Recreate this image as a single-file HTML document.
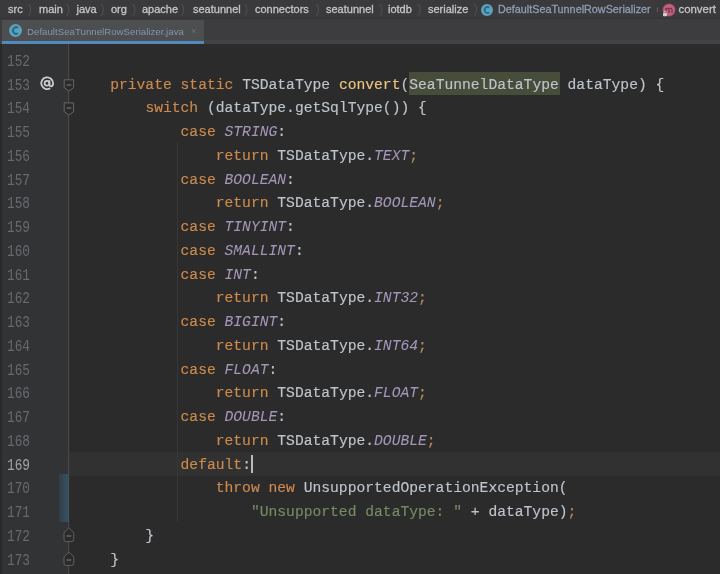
<!DOCTYPE html>
<html><head><meta charset="utf-8">
<style>
*{margin:0;padding:0;box-sizing:border-box}
html,body{width:720px;height:574px;overflow:hidden;background:#2b2b2b}
body{position:relative;font-family:"Liberation Sans",sans-serif}
#wrap{position:absolute;left:0;top:0;width:720px;height:574px;will-change:transform}
.a{position:absolute}
#crumbs{left:0;top:0;width:720px;height:19px;background:#3a3a3c}
#crumbs span{position:absolute;top:3px;font-size:11px;color:#c4c4c4;-webkit-text-stroke:0.3px currentColor;white-space:nowrap;line-height:13px}
#crumbs span.ch{color:#707070;font-size:10px}
#tabs{left:0;top:19px;width:720px;height:25px;background:#3d3d3f}
.ln{position:absolute;left:7.2px;transform:scale(0.87,1.08);transform-origin:0 50%;font-family:"Liberation Mono",monospace;font-size:14.67px;color:#676a6d;line-height:23.75px;white-space:pre}
.cl{position:absolute;left:75px;font-family:"Liberation Mono",monospace;font-size:14.67px;color:#bec4cb;-webkit-text-stroke:0.15px currentColor;line-height:23.75px;white-space:pre}
.k{color:#cc8a4e}
.f{color:#a496b8;font-style:italic;-webkit-text-stroke:0.05px currentColor}
.m{color:#ecc682}
.s{color:#778a64}
.sc{color:#b48c5e}
.hl{background:#3b3f33}
.icon{position:absolute;border-radius:50%}
</style></head><body><div id="wrap">
<div id="crumbs" class="a">
<span style="left:8px">src</span>
<span style="left:39px">main</span>
<span style="left:76.5px">java</span>
<span style="left:111px">org</span>
<span style="left:142px">apache</span>
<span style="left:193px">seatunnel</span>
<span style="left:255px">connectors</span>
<span style="left:326px">seatunnel</span>
<span style="left:388px">iotdb</span>
<span style="left:428px">serialize</span>
<span style="left:498px;color:#8d9db3;font-size:10.8px">DefaultSeaTunnelRowSerializer</span>
<span style="left:678.5px;font-size:11.4px">convert</span>
<svg class="a" style="left:0;top:0" width="720" height="19"><path d="M28.7 4 Q32.9 9.9 28.7 15.8 M66.8 4 Q71.0 9.9 66.8 15.8 M101.4 4 Q105.6 9.9 101.4 15.8 M132.9 4 Q137.1 9.9 132.9 15.8 M181.7 4 Q185.9 9.9 181.7 15.8 M244.9 4 Q249.1 9.9 244.9 15.8 M316.4 4 Q320.6 9.9 316.4 15.8 M379.9 4 Q384.1 9.9 379.9 15.8 M418.2 4 Q422.4 9.9 418.2 15.8 M474.4 4 Q478.6 9.9 474.4 15.8" fill="none" stroke="#505153" stroke-width="1"/><path d="M657.5 7.5 V12" stroke="#5c5d5f" stroke-width="1.2"/></svg>
</div>
<div class="a" style="left:0;top:16.5px;width:720px;height:3px;background:linear-gradient(#3a3a3c,#353537 50%,#3b3b3d)"></div>
<svg class="a" style="left:480px;top:3px" width="14" height="14" viewBox="-7 -7 14 14"><circle cx="0" cy="0" r="6" fill="#5aa2bd"/><path d="M 2.28 -2.52 A 3.00 3.00 0 1 0 2.28 2.52" fill="none" stroke="#2a6888" stroke-width="1.80"/></svg>
<svg class="a" style="left:662px;top:3px" width="14" height="14" viewBox="0 0 14 14"><circle cx="7" cy="7" r="6.2" fill="#c0617f" stroke="#8e3f58" stroke-width="0.5"/><path d="M4 10 V5.2 M4 6.2 Q4.8 5 5.8 5.2 Q7 5.3 7 6.4 V10 M7 6.2 Q7.8 5 8.8 5.2 Q10 5.3 10 6.4 V10" fill="none" stroke="#6a2538" stroke-width="1"/><rect x="1" y="10" width="4" height="3.3" rx="0.8" fill="#d0d0d0"/><path d="M1.9 10 V9.2 A1.1 1.1 0 0 1 4.1 9.2 V10" fill="none" stroke="#d0d0d0" stroke-width="0.8"/></svg>
<div id="tabs" class="a"></div>
<div class="a" style="left:0;top:40px;width:720px;height:4px;background:#434345"></div>
<div class="a" style="left:2px;top:20px;width:202px;height:24px;background:#4c4e50"></div>
<svg class="a" style="left:189px;top:27px" width="10" height="8"><path d="M2.8 2.2 L6.6 5.8 M6.6 2.2 L2.8 5.8" stroke="#6c6e70" stroke-width="1"/></svg>
<div class="a" style="left:2px;top:41px;width:202px;height:3px;background:#5289bf"></div>
<svg class="a" style="left:8.0px;top:23.2px" width="15.0" height="15.0" viewBox="-7.5 -7.5 15.0 15.0"><circle cx="0" cy="0" r="6.5" fill="#5aa2bd"/><path d="M 2.47 -2.73 A 3.25 3.25 0 1 0 2.47 2.73" fill="none" stroke="#2a6888" stroke-width="1.95"/></svg>
<div class="a" style="left:27px;top:25.2px;font-size:9.7px;color:#8396ac;line-height:13px;white-space:nowrap">DefaultSeaTunnelRowSerializer.java</div>
<div class="a" style="left:0;top:44px;width:69px;height:530px;background:#313335"></div>
<div class="a" style="left:0;top:44px;width:2px;height:530px;background:#2a2a2a"></div>
<div class="a" style="left:69px;top:452.00px;width:651px;height:23.75px;background:#313131"></div>
<svg class="a" style="left:58px;top:44px" width="22" height="530" viewBox="58 44 22 530"><path d="M68.7 44 V79.6 M68.7 91.3 V102.7 M68.7 115.3 V527.8 M68.7 541.7 V552 M68.7 565.4 V574" stroke="#4d4d4d" stroke-width="1"/><path d="M64.2 79.8 H73.6 V87.5 L68.9 91.3 L64.2 87.5 Z" fill="#2b2b2b" stroke="#6e6e6e" stroke-width="0.9"/><path d="M64.2 102.9 H73.6 V111.5 L68.9 115.3 L64.2 111.5 Z" fill="#2b2b2b" stroke="#6e6e6e" stroke-width="0.9"/><path d="M66 541.6 H71.8 Q73.8 541.6 73.8 539.4 V532.6 L68.9 527.8 L64 532.6 V539.4 Q64 541.6 66 541.6 Z" fill="#2b2b2b" stroke="#666666" stroke-width="0.9"/><path d="M66 565.4 H71.8 Q73.8 565.4 73.8 563.2 V556.8 L68.9 552 L64 556.8 V563.2 Q64 565.4 66 565.4 Z" fill="#2b2b2b" stroke="#666666" stroke-width="0.9"/><path d="M66.5 85 H71.3 M66.5 108 H71.3 M66.5 536 H71.3 M66.5 560 H71.3" stroke="#8a8a8a" stroke-width="0.9"/></svg>
<svg class="a" style="left:36px;top:72px" width="24" height="22" viewBox="36 72 24 22"><circle cx="47" cy="83.3" r="2.4" fill="none" stroke="#cccccc" stroke-width="1.8"/><path d="M49.4 80.2 V84.7 Q49.5 86.3 51 86.3 Q53.1 86.1 53.1 83.2 A5.9 5.9 0 1 0 50.2 88.3" fill="none" stroke="#cccccc" stroke-width="1.8"/></svg>
<div class="a" style="left:59px;top:474px;width:9.5px;height:48px;background:linear-gradient(90deg,#303f4b,#3a5264)"></div>
<div class="a" style="left:408.5px;top:72px;width:151px;height:22.5px;background:#484c3a"></div>
<div class="a" style="left:177px;top:142px;width:1px;height:380px;background:#373737"></div>
<div class="ln" style="top:50.95px">152</div>
<div class="ln" style="top:74.70px">153</div>
<div class="cl" style="top:73.50px">    <span class="k">private static </span>TSDataType <span class="m">convert</span>(SeaTunnelDataType dataType) {</div>
<div class="ln" style="top:98.45px">154</div>
<div class="cl" style="top:97.25px">        <span class="k">switch </span>(dataType.getSqlType()) {</div>
<div class="ln" style="top:122.20px">155</div>
<div class="cl" style="top:121.00px">            <span class="k">case </span><span class="f">STRING</span>:</div>
<div class="ln" style="top:145.95px">156</div>
<div class="cl" style="top:144.75px">                <span class="k">return </span>TSDataType.<span class="f">TEXT</span><span class="sc">;</span></div>
<div class="ln" style="top:169.70px">157</div>
<div class="cl" style="top:168.50px">            <span class="k">case </span><span class="f">BOOLEAN</span>:</div>
<div class="ln" style="top:193.45px">158</div>
<div class="cl" style="top:192.25px">                <span class="k">return </span>TSDataType.<span class="f">BOOLEAN</span><span class="sc">;</span></div>
<div class="ln" style="top:217.20px">159</div>
<div class="cl" style="top:216.00px">            <span class="k">case </span><span class="f">TINYINT</span>:</div>
<div class="ln" style="top:240.95px">160</div>
<div class="cl" style="top:239.75px">            <span class="k">case </span><span class="f">SMALLINT</span>:</div>
<div class="ln" style="top:264.70px">161</div>
<div class="cl" style="top:263.50px">            <span class="k">case </span><span class="f">INT</span>:</div>
<div class="ln" style="top:288.45px">162</div>
<div class="cl" style="top:287.25px">                <span class="k">return </span>TSDataType.<span class="f">INT32</span><span class="sc">;</span></div>
<div class="ln" style="top:312.20px">163</div>
<div class="cl" style="top:311.00px">            <span class="k">case </span><span class="f">BIGINT</span>:</div>
<div class="ln" style="top:335.95px">164</div>
<div class="cl" style="top:334.75px">                <span class="k">return </span>TSDataType.<span class="f">INT64</span><span class="sc">;</span></div>
<div class="ln" style="top:359.70px">165</div>
<div class="cl" style="top:358.50px">            <span class="k">case </span><span class="f">FLOAT</span>:</div>
<div class="ln" style="top:383.45px">166</div>
<div class="cl" style="top:382.25px">                <span class="k">return </span>TSDataType.<span class="f">FLOAT</span><span class="sc">;</span></div>
<div class="ln" style="top:407.20px">167</div>
<div class="cl" style="top:406.00px">            <span class="k">case </span><span class="f">DOUBLE</span>:</div>
<div class="ln" style="top:430.95px">168</div>
<div class="cl" style="top:429.75px">                <span class="k">return </span>TSDataType.<span class="f">DOUBLE</span><span class="sc">;</span></div>
<div class="ln" style="top:454.70px;color:#a4a3a3">169</div>
<div class="cl" style="top:453.50px">            <span class="k">default</span>:</div>
<div class="ln" style="top:478.45px">170</div>
<div class="cl" style="top:477.25px">                <span class="k">throw new </span>UnsupportedOperationException(</div>
<div class="ln" style="top:502.20px">171</div>
<div class="cl" style="top:501.00px">                    <span class="s">"Unsupported dataType: "</span> + dataType)<span class="sc">;</span></div>
<div class="ln" style="top:525.95px">172</div>
<div class="cl" style="top:524.75px">        }</div>
<div class="ln" style="top:549.70px">173</div>
<div class="cl" style="top:548.50px">    }</div>
<div class="a" style="left:251px;top:455.00px;width:2px;height:18px;background:#bbbbbb"></div>
</div></body></html>
